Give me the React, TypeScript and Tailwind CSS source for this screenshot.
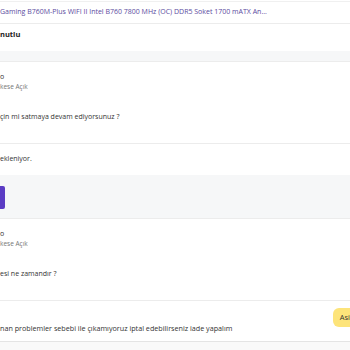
import React from 'react';

const font = { fontFamily: '"Open Sans", "Liberation Sans", sans-serif' };

function Message({ name, question }: { name: string; question: string }) {
  return (
    <div className="h-[82px] border-b border-[#ececec] pt-[10px]">
      <div className="text-[7px] leading-[10px] text-[#333]">{name}</div>
      <div className="text-[6.5px] leading-[10px] text-[#777]">kese Açık</div>
      <div className="pt-[20px] text-[7px] leading-[10px] text-[#333]">{question}</div>
    </div>
  );
}

export default function App() {
  return (
    <div className="w-[350px] h-[350px] overflow-hidden bg-white" style={font}>
      <div className="w-[380px]">
        <div className="mt-px border-t border-[#f0f0f0]" />

        <div className="h-[22px] flex items-center border-b border-[#ececec] text-[7px] text-[#5b4ba0] whitespace-nowrap">
          Gaming B760M-Plus WIFI II Intel B760 7800 MHz (OC) DDR5 Soket 1700 mATX An...
        </div>

        <div className="h-[27px] pt-[5px] text-[7.5px] leading-[10px] font-bold text-[#222]">nutlu</div>

        <div className="h-[11px] bg-[#f6f7f8] border-b border-[#ececec]" />

        <Message name="o" question="çin mi satmaya devam ediyorsunuz ?" />

        <div className="h-[31px] flex items-center text-[7px] text-[#333]">ekleniyor.</div>

        <div className="h-[44px] bg-[#f6f7f8] border-b border-[#ececec] pt-[11px]">
          <div className="w-[5px] h-[23px] bg-[#5b3cc4] rounded-r-[2px]" />
        </div>

        <Message name="o" question="esi ne zamandır ?" />

        <div className="h-[41px] border-b border-[#e4e4e4] flex">
          <div className="pt-[22px] text-[7.2px] leading-[10px] text-[#333] whitespace-nowrap">
            nan problemler sebebi ile çıkamıyoruz iptal edebilirseniz iade yapalım
          </div>
          <div className="ml-auto mr-[8px] pt-[7px]">
            <div className="h-[19px] px-[7px] flex items-center rounded-[6px] bg-[#fde47a] text-[7.5px] text-[#333]">
              Asistan
            </div>
          </div>
        </div>

        <div className="h-[20px] bg-[#f9f9f9]" />
      </div>
    </div>
  );
}
